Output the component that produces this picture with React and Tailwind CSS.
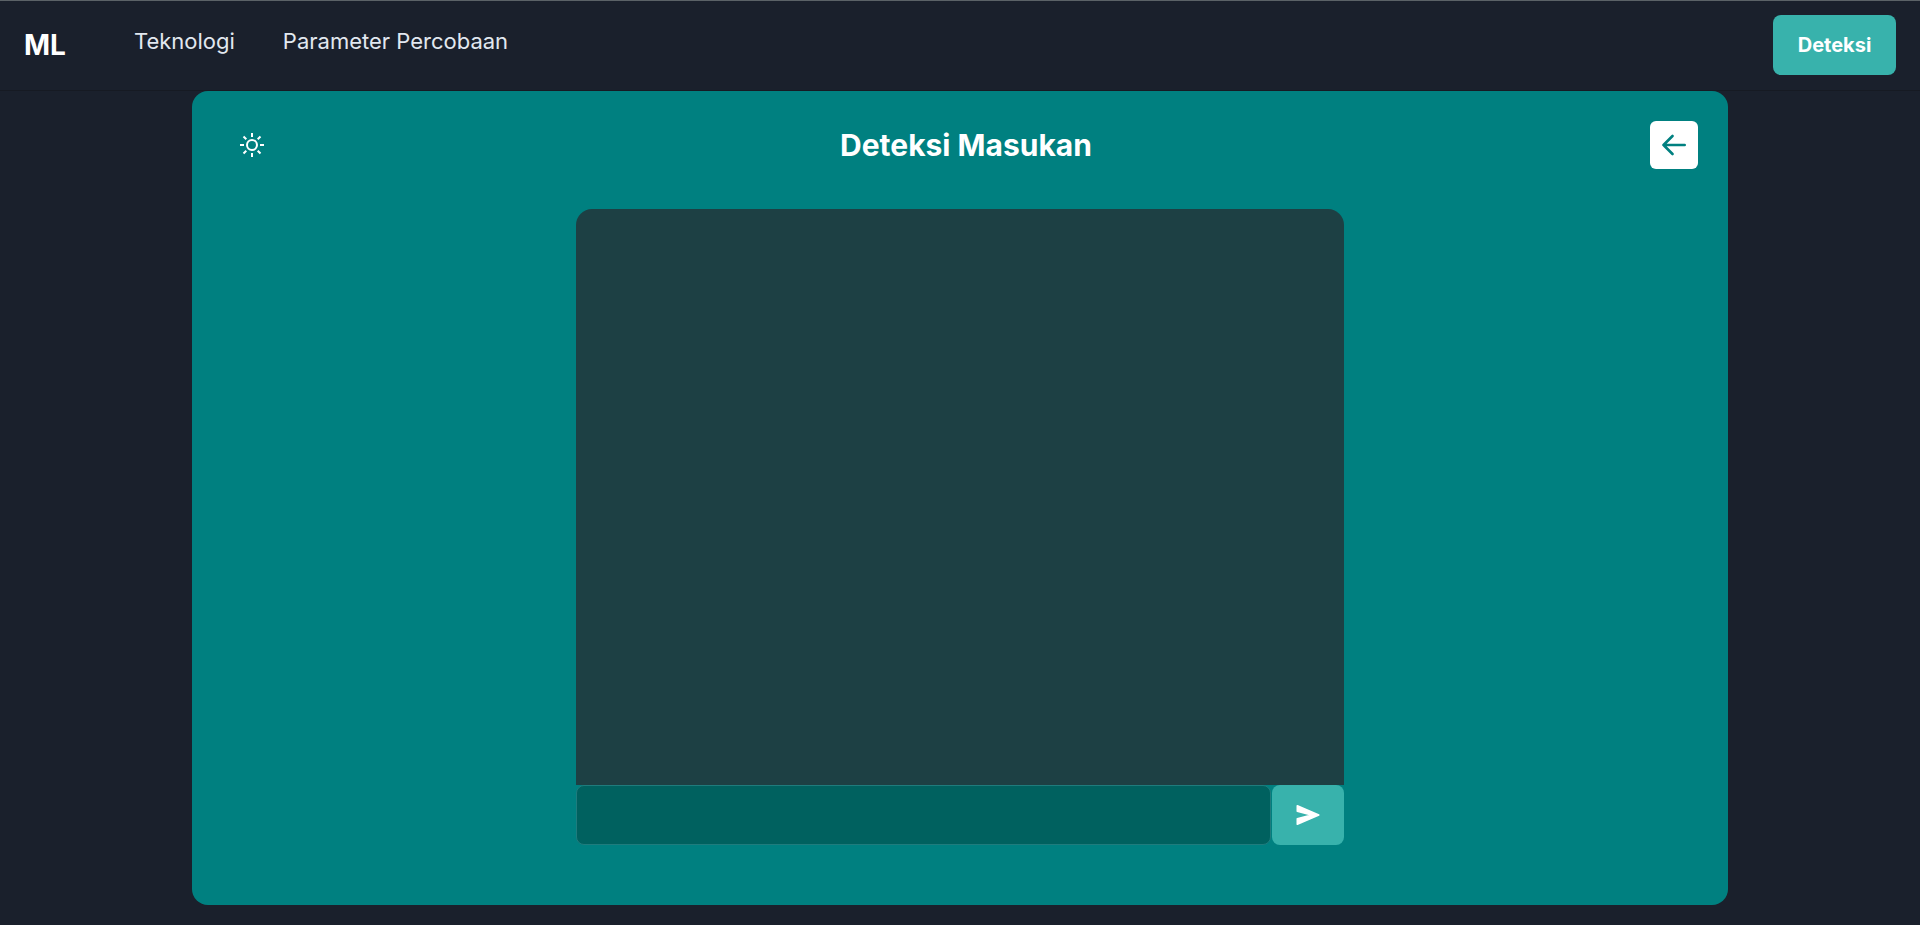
function SunIcon() {
  return (
    <svg viewBox="0 0 24 24" className="size-6" fill="none" stroke="currentColor" strokeWidth="2">
      <circle cx="12" cy="12" r="5" />
      <path d="M12 0v4M12 20v4M0 12h4M20 12h4M3.5 3.5l2.8 2.8M17.7 17.7l2.8 2.8M3.5 20.5l2.8-2.8M17.7 6.3l2.8-2.8" />
    </svg>
  );
}

function ArrowIcon() {
  return (
    <svg
      viewBox="0 0 24 24"
      className="size-6"
      fill="none"
      stroke="currentColor"
      strokeWidth="2.6"
      strokeLinecap="round"
      strokeLinejoin="round"
    >
      <path d="M22.7 12H1.5M10.5 3L1.5 12l9 9" />
    </svg>
  );
}

function SendIcon() {
  return (
    <svg
      viewBox="0 0 24 22"
      className="h-[22px] w-6"
      fill="currentColor"
      stroke="currentColor"
      strokeWidth="1.6"
      strokeLinejoin="round"
    >
      <path d="M1.3 1.8L22.8 11 1.3 20.2v-5.4L15.5 11 1.3 7.2z" />
    </svg>
  );
}

function Navbar() {
  return (
    <header className="flex items-center border-t border-b border-t-[#5b6267] border-b-[#161a23] px-6 pt-3.5 pb-[15px]">
      <a href="#" className="text-[28px] leading-9 font-bold text-white">
        ML
      </a>
      <nav className="ml-[68px] flex gap-12 self-start pt-3 text-[22px] leading-7 text-[#e2e8f0]">
        <a href="#teknologi">Teknologi</a>
        <a href="#parameter">Parameter Percobaan</a>
      </nav>
      <button
        type="button"
        className="ml-auto h-[60px] w-[123px] rounded-lg bg-[#38b2ac] text-xl font-bold text-white"
      >
        Deteksi
      </button>
    </header>
  );
}

function Detector() {
  return (
    <main className="mx-auto w-4/5 rounded-2xl bg-[#008080] px-[30px] pt-6 pb-[60px]">
      <div className="flex items-center justify-between">
        <button
          type="button"
          aria-label="Tema"
          className="grid size-[60px] place-items-center text-white"
        >
          <SunIcon />
        </button>
        <h1 className="text-[30px] leading-9 font-bold text-white">Deteksi Masukan</h1>
        <button
          type="button"
          aria-label="Kembali"
          className="grid size-12 place-items-center rounded-md bg-white text-[#008080]"
        >
          <ArrowIcon />
        </button>
      </div>
      <section className="mx-auto mt-[34px] w-[52%]">
        <div className="h-[576px] rounded-t-2xl bg-[#1d4044]" />
        <form className="flex gap-px" onSubmit={(e) => e.preventDefault()}>
          <input
            type="text"
            aria-label="Masukan"
            className="h-[60px] min-w-0 flex-1 rounded-lg border border-[#1f7c7d] bg-[#00615f] px-5 text-xl text-white outline-none"
          />
          <button
            type="submit"
            aria-label="Kirim"
            className="grid h-[60px] w-[72px] place-items-center rounded-lg bg-[#38b2ac] text-white"
          >
            <SendIcon />
          </button>
        </form>
      </section>
    </main>
  );
}

export default function App() {
  return (
    <div className="min-h-screen bg-[#1a202c] font-['Inter',sans-serif]">
      <Navbar />
      <Detector />
    </div>
  );
}
